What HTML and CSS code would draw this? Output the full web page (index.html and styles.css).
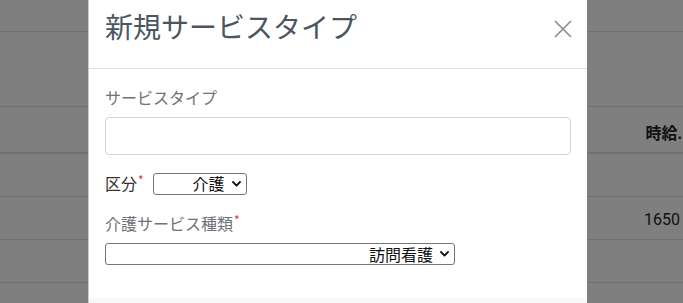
FILE: index.html
```html
<!DOCTYPE html>
<html lang="ja">
<head>
<meta charset="utf-8">
<link rel="stylesheet" href="styles.css">
</head>
<body>
<div class="page">
  <div class="band band-top"></div>
  <div class="band band-mid"></div>
  <div class="row row-head"><span class="cell head-cell">時給.</span></div>
  <div class="row"></div>
  <div class="row"><span class="cell">1650</span></div>
  <div class="row"></div>
  <div class="row"></div>
</div>
<div class="backdrop"></div>
<div class="modal">
  <div class="modal-header">
    <h4 class="modal-title">新規サービスタイプ</h4>
    <button class="close" type="button" aria-label="Close">
      <svg width="18" height="18" viewBox="0 0 18 18"><path d="M1 1 L17 17 M17 1 L1 17" stroke="#8a8a8a" stroke-width="1.6" fill="none"/></svg>
    </button>
  </div>
  <div class="modal-body">
    <div class="form-group">
      <label class="label muted">サービスタイプ</label>
      <input class="form-control" type="text">
    </div>
    <div class="form-group inline">
      <label class="label dark">区分<span class="req">*</span></label>
      <span class="select-wrap">
        <select class="sel sel-small"><option>介護</option></select>
        <svg class="chev" width="9" height="6" viewBox="0 0 9 6"><path d="M1 1 L4.5 4.6 L8 1" stroke="#111" stroke-width="1.8" fill="none" stroke-linecap="round" stroke-linejoin="round"/></svg>
      </span>
    </div>
    <div class="form-group">
      <label class="label muted">介護サービス種類<span class="req">*</span></label>
      <span class="select-wrap">
        <select class="sel sel-wide"><option>訪問看護</option></select>
        <svg class="chev" width="9" height="6" viewBox="0 0 9 6"><path d="M1 1 L4.5 4.6 L8 1" stroke="#111" stroke-width="1.8" fill="none" stroke-linecap="round" stroke-linejoin="round"/></svg>
      </span>
    </div>
  </div>
  <div class="modal-footer"></div>
</div>
</body>
</html>
```

FILE: styles.css
```css
html, body {
  margin: 0;
  padding: 0;
  width: 683px;
  height: 303px;
  overflow: hidden;
  background: #fff;
  font-family: "Liberation Sans", "Noto Sans CJK JP", sans-serif;
}
.page {
  display: flex;
  flex-direction: column;
  height: 303px;
  overflow: hidden;
}
.band-top {
  flex: 0 0 31px;
  border-bottom: 1px solid #dee2e6;
}
.band-mid {
  flex: 0 0 74px;
}
.row {
  flex: 0 0 42px;
  border-top: 1px solid #dee2e6;
  display: flex;
  align-items: center;
  justify-content: flex-end;
  padding-right: 3px;
  color: #212529;
  font-size: 16px;
}
.row-head {
  flex: 0 0 45px;
  border-bottom: 2px solid #dee2e6;
  margin-bottom: -1px;
  padding-right: 1px;
}
.cell {
  font-family: "Roboto", "Liberation Sans", "Noto Sans CJK JP", sans-serif;
  font-size: 16px;
  margin-top: 3px;
}
.head-cell {
  font-weight: bold;
  font-family: "Liberation Sans", "Noto Sans CJK JP", sans-serif;
  margin-top: 5px;
}
.backdrop {
  position: fixed;
  inset: 0;
  background: rgba(0, 0, 0, 0.5);
}
.modal {
  position: fixed;
  top: 0;
  left: 88px;
  width: 498px;
  height: 303px;
  background: #fff;
  border-left: 1px solid rgba(0, 0, 0, 0.2);
  display: flex;
  flex-direction: column;
  font-family: "Noto Sans CJK JP", sans-serif;
}
.modal-header {
  display: flex;
  align-items: flex-start;
  justify-content: space-between;
  padding: 5px 15px 21px 16px;
  border-bottom: 1px solid #dee2e6;
}
.modal-title {
  margin: 0;
  font-size: 28px;
  font-weight: normal;
  line-height: 42px;
  color: #4a5560;
}
.close {
  border: 0;
  background: transparent;
  padding: 0;
  margin-top: 15px;
  width: 18px;
  height: 18px;
  display: flex;
}
.modal-body {
  padding: 16px 16px 0 16px;
  flex: 0 0 auto;
  height: 213px;
}
.form-group {
  margin-bottom: 16px;
  display: flex;
  flex-direction: column;
  align-items: flex-start;
}
.form-group.inline {
  flex-direction: row;
  align-items: center;
  height: 24px;
}
.label {
  font-size: 16px;
  line-height: 24px;
  margin-bottom: 8px;
}
.inline .label {
  margin-bottom: 0;
  margin-right: 9px;
}
.muted { color: #6d7278; }
.dark { color: #333; }
.req {
  color: #e3342f;
  font-size: 12px;
  vertical-align: top;
  line-height: 18px;
  margin-left: 1px;
}
.form-control {
  box-sizing: border-box;
  width: 466px;
  height: 38px;
  border: 1px solid #ced4da;
  border-radius: 4px;
  margin: 0;
  padding: 6px 12px;
  font-size: 16px;
}
.select-wrap {
  position: relative;
  display: inline-flex;
}
.sel {
  -webkit-appearance: none;
  appearance: none;
  box-sizing: border-box;
  height: 22px;
  line-height: 18px;
  font-family: "Noto Sans CJK JP", sans-serif;
  font-size: 16px;
  color: #111;
  border: 1px solid #767676;
  border-radius: 3px;
  background: #fff;
  text-align: right;
  text-align-last: right;
  margin: 0;
  padding: 0 21px 1px 2px;
}
.chev {
  position: absolute;
  right: 6px;
  top: 8px;
  pointer-events: none;
}
.sel-small { width: 94px; margin-top: 1px; }
.sel-small + .chev { top: 9px; }
.sel-wide { width: 350px; }
.modal-footer {
  flex: 1 1 auto;
  background: #f8f8f9;
}
```
